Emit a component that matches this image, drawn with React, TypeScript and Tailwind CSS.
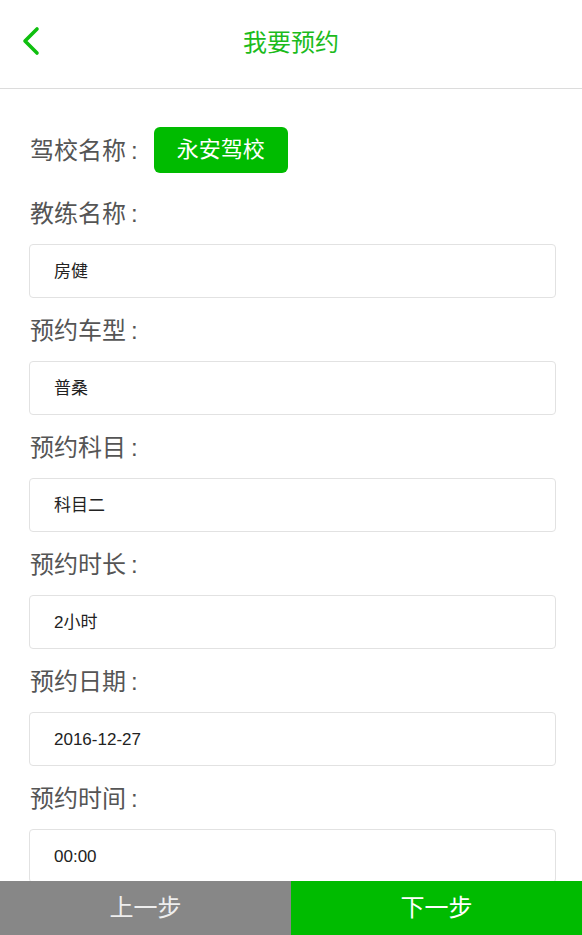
const fields = [
    { label: '教练名称', value: '房健' },
    { label: '预约车型', value: '普桑' },
    { label: '预约科目', value: '科目二' },
    { label: '预约时长', value: '2小时' },
    { label: '预约日期', value: '2016-12-27' },
    { label: '预约时间', value: '00:00' },
]

const font = { fontFamily: '"Liberation Sans", "Noto Sans CJK SC", sans-serif' }

function Label({ text }: { text: string }) {
    return (
        <span className="text-[24px] text-[#555] leading-[30px] relative top-[1px]">
            {text}
            <span className="ml-[5px]">:</span>
        </span>
    )
}

export default function App() {
    return (
        <div className="w-[582px] h-[935px] bg-white flex flex-col overflow-hidden" style={font}>
            <header className="h-[89px] shrink-0 flex items-center relative border-b border-[#dcdcdc]">
                <svg className="absolute left-[21px] top-[26px]" width="22" height="30" viewBox="0 0 22 30" fill="none">
                    <polyline points="16,3 4,15 16,27" stroke="#0fbf0f" strokeWidth="3.6" strokeLinecap="round" strokeLinejoin="round" />
                </svg>
                <h1 className="w-full text-center text-[24px] text-[#1cbb1c] leading-none -mt-[3px]">我要预约</h1>
            </header>

            <main className="flex-1 overflow-hidden pl-[29px] pr-[26px] pt-[38px]">
                <div className="flex items-center h-[46px] pl-[1px]">
                    <Label text="驾校名称" />
                    <button className="ml-[16px] w-[134px] h-[46px] rounded-[6px] bg-[#00bb00] text-white text-[22px] leading-none">
                        永安驾校
                    </button>
                </div>

                <div className="mt-[25px]">
                    {fields.map((f) => (
                        <div key={f.label}>
                            <div className="pl-[1px] h-[30px]">
                                <Label text={f.label} />
                            </div>
                            <div className="mt-[16px] mb-[17px] h-[54px] rounded-[4px] border border-[#e2e2e2] flex items-center pl-[24px] pt-[2px] text-[17px] text-[#222]">
                                {f.value}
                            </div>
                        </div>
                    ))}
                </div>
            </main>

            <footer className="h-[54px] shrink-0 flex text-[24px] leading-none">
                <button className="w-[291px] bg-[#878787] text-[#eee]">上一步</button>
                <button className="flex-1 bg-[#00bb00] text-white">下一步</button>
            </footer>
        </div>
    )
}
